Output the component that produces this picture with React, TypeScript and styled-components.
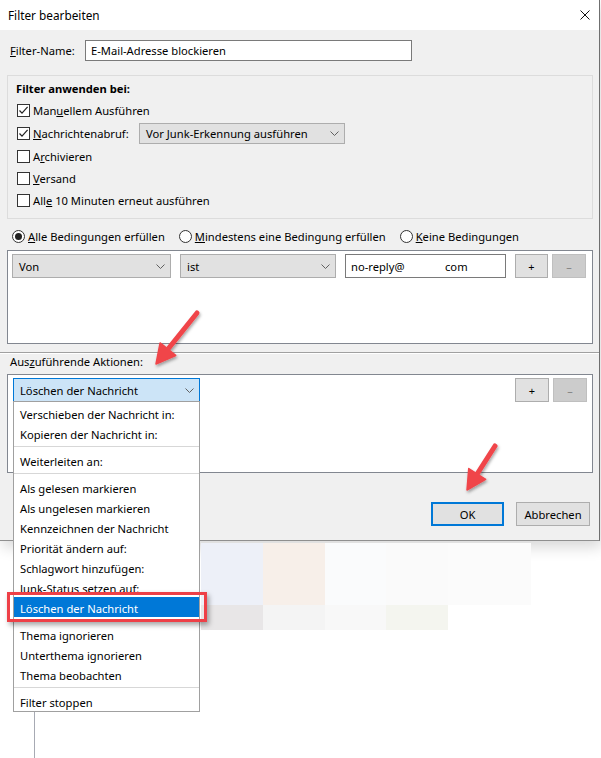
import React from 'react';
import styled, { createGlobalStyle } from 'styled-components';

const GlobalStyle = createGlobalStyle`
  html, body { margin: 0; padding: 0; background: #fff; }
  body {
    font-family: "Noto Sans", "Liberation Sans", sans-serif;
    font-size: 11.2px;
    color: #000;
  }
  * { box-sizing: border-box; }
`;

const Page = styled.div`
  position: relative;
  width: 601px;
  height: 758px;
  overflow: hidden;
  background: #fff;
`;

const Dialog = styled.div`
  width: 600px;
  height: 541px;
  display: flex;
  flex-direction: column;
  border-right: 1px solid #6f6f6f;
  border-bottom: 1px solid #8f8f8f;
  background: #f0f0f0;
  box-shadow: 2px 6px 14px rgba(0, 0, 0, 0.16);
`;

const TitleBar = styled.div`
  height: 30px;
  flex: none;
  background: #fff;
  display: flex;
  align-items: center;
  justify-content: space-between;
  padding: 0 9px 0 8px;
  font-size: 11.8px;
`;

const Body = styled.div`
  flex: 1;
  display: flex;
  flex-direction: column;
  padding: 0 6px 14px 7px;
`;

const NameRow = styled.div`
  margin-top: 10px;
  height: 21px;
  display: flex;
  align-items: center;
`;

const FieldLabel = styled.label<{ $w?: number }>`
  width: ${(p) => (p.$w ? `${p.$w}px` : 'auto')};
  flex: none;
  padding-left: 3px;
  white-space: nowrap;
`;

const TextBox = styled.div<{ $w: number; $h: number }>`
  width: ${(p) => p.$w}px;
  height: ${(p) => p.$h}px;
  flex: none;
  background: #fff;
  border: 1px solid #7a7a7a;
  padding-left: 5px;
  display: flex;
  align-items: center;
  white-space: nowrap;
`;

const Key = styled.span`
  text-decoration: underline;
  text-underline-offset: 1px;
`;

const GroupBox = styled.div`
  margin-top: 14px;
  height: 144px;
  border: 1px solid #dcdcdc;
  padding: 4px 0 0 9px;
  display: flex;
  flex-direction: column;
`;

const GroupTitle = styled.div`
  font-weight: bold;
  height: 18px;
  line-height: 18px;
  margin: 0 0 1px -1px;
`;

const CheckRow = styled.div<{ $h: number }>`
  height: ${(p) => p.$h}px;
  display: flex;
  align-items: center;
  gap: 3px;
  white-space: nowrap;
`;

const Box = styled.span`
  width: 13px;
  height: 13px;
  flex: none;
  border: 1px solid #333;
  background: #fff;
  display: flex;
  align-items: center;
  justify-content: center;
`;

const RowLabel = styled.span<{ $w?: number }>`
  width: ${(p) => (p.$w ? `${p.$w}px` : 'auto')};
  flex: none;
`;

const SelectBox = styled.div<{ $w: number; $h: number; $active?: boolean }>`
  width: ${(p) => p.$w}px;
  height: ${(p) => p.$h}px;
  flex: none;
  position: relative;
  display: flex;
  align-items: center;
  justify-content: space-between;
  padding: 0 5px 0 6px;
  white-space: nowrap;
  background: ${(p) => (p.$active ? '#cce4f7' : '#e1e1e1')};
  border: 1px solid ${(p) => (p.$active ? '#0078d7' : '#adadad')};
`;

const RadioRow = styled.div`
  margin: 7px 0 0 5px;
  height: 20px;
  display: flex;
  align-items: center;
  gap: 14px;
  white-space: nowrap;
`;

const RadioItem = styled.span`
  display: flex;
  align-items: center;
  gap: 3px;
`;

const RadioCircle = styled.span<{ $on?: boolean }>`
  width: 13px;
  height: 13px;
  border-radius: 50%;
  border: 1px solid #333;
  background: #fff;
  display: flex;
  align-items: center;
  justify-content: center;
  &::after {
    content: '';
    width: 7px;
    height: 7px;
    border-radius: 50%;
    background: ${(p) => (p.$on ? '#222' : 'transparent')};
  }
`;

const ListBox = styled.div<{ $h: number; $pad: string }>`
  height: ${(p) => p.$h}px;
  flex: none;
  background: #fff;
  border: 1px solid #828790;
  padding: ${(p) => p.$pad};
  display: flex;
  align-items: flex-start;
`;

const ConditionsBox = styled(ListBox)`
  margin-top: 4px;
  gap: 9px;
`;

const ActionsBox = styled(ListBox)`
  margin-top: 4px;
  justify-content: space-between;
  position: relative;
  z-index: 5;
`;

const ButtonPair = styled.div`
  display: flex;
  gap: 4px;
`;

const SmallButton = styled.div<{ $disabled?: boolean; $w: number }>`
  width: ${(p) => p.$w}px;
  height: 24px;
  display: flex;
  align-items: center;
  justify-content: center;
  background: ${(p) => (p.$disabled ? '#cccccc' : '#e1e1e1')};
  border: 1px solid ${(p) => (p.$disabled ? '#bfbfbf' : '#adadad')};
  color: ${(p) => (p.$disabled ? '#838383' : '#000')};
  font-size: 11px;
`;

const Separator = styled.div`
  margin: 8px -6px 0 -7px;
  height: 2px;
  border-top: 1px solid #a0a0a0;
  border-bottom: 1px solid #fff;
`;

const ActionsLabel = styled.div`
  height: 16px;
  line-height: 16px;
  padding-left: 3px;
`;

const ButtonRow = styled.div`
  margin-top: 29px;
  height: 24px;
  display: flex;
  justify-content: flex-end;
  gap: 12px;
  padding-right: 3px;
`;

const DialogButton = styled.div<{ $default?: boolean; $w: number }>`
  width: ${(p) => p.$w}px;
  height: 24px;
  display: flex;
  align-items: center;
  justify-content: center;
  background: #e1e1e1;
  border: ${(p) => (p.$default ? '2px solid #0078d7' : '1px solid #adadad')};
`;

const DropList = styled.div`
  position: absolute;
  top: 100%;
  left: -1px;
  width: 187px;
  background: #fff;
  border: 1px solid #a0a0a0;
  padding-top: 1px;
  z-index: 20;
`;

const DropItem = styled.div<{ $selected?: boolean }>`
  position: relative;
  height: 20px;
  line-height: 23px;
  padding-left: 6px;
  white-space: nowrap;
  background: ${(p) => (p.$selected ? '#0078d7' : 'transparent')};
  color: ${(p) => (p.$selected ? '#fff' : '#000')};
`;

const DropSep = styled.div`
  height: 7px;
  background: linear-gradient(#d7d7d7, #d7d7d7) center / 100% 1px no-repeat;
`;

const RedFrame = styled.span`
  position: absolute;
  left: -7px;
  right: -8px;
  top: -5px;
  bottom: -5px;
  border: 3px solid #ee4047;
  box-shadow: 2px 3px 5px rgba(0, 0, 0, 0.35);
  pointer-events: none;
`;

const Tiles = styled.div`
  margin: 2px 0 0 201px;
  display: grid;
  grid-template-columns: 62px 62px 61px 62px 83px;
  grid-template-rows: 62px 25px;
  width: 330px;
`;

const Tile = styled.div<{ $c: string }>`
  background: ${(p) => p.$c};
`;

const PageRule = styled.div`
  margin-left: 34px;
  width: 1px;
  height: 128px;
  background: #a7aab3;
`;

const Overlay = styled.svg`
  position: absolute;
  left: 0;
  top: 0;
  width: 601px;
  height: 758px;
  pointer-events: none;
  z-index: 50;
`;

const Chevron = () => (
  <svg width="9" height="5" viewBox="0 0 9 5">
    <polyline points="0.5,0.5 4.5,4.5 8.5,0.5" fill="none" stroke="#606060" strokeWidth="1" />
  </svg>
);

const Check = ({ on }: { on?: boolean }) => (
  <Box>
    {on && (
      <svg width="11" height="11" viewBox="0 0 11 11">
        <polyline points="1.5,5.5 4,8.2 9.6,1.8" fill="none" stroke="#222" strokeWidth="1.2" />
      </svg>
    )}
  </Box>
);

const Arrow = ({ x1, y1, x2, y2 }: { x1: number; y1: number; x2: number; y2: number }) => {
  const dx = x2 - x1;
  const dy = y2 - y1;
  const len = Math.hypot(dx, dy);
  const ux = dx / len;
  const uy = dy / len;
  const hl = 19;
  const hw = 10;
  const bx = x2 - ux * hl;
  const by = y2 - uy * hl;
  const px = -uy;
  const py = ux;
  const pts = `${x2},${y2} ${bx + px * hw},${by + py * hw} ${bx - px * hw},${by - py * hw}`;
  return (
    <g filter="url(#arrowShadow)">
      <line x1={x1} y1={y1} x2={bx + ux * 2} y2={by + uy * 2} stroke="#f0454a" strokeWidth="5" strokeLinecap="round" />
      <polygon points={pts} fill="#f0454a" stroke="#f0454a" strokeWidth="1.5" strokeLinejoin="round" />
    </g>
  );
};

const menuItems: (string | null)[] = [
  'Verschieben der Nachricht in:',
  'Kopieren der Nachricht in:',
  null,
  'Weiterleiten an:',
  null,
  'Als gelesen markieren',
  'Als ungelesen markieren',
  'Kennzeichnen der Nachricht',
  'Priorität ändern auf:',
  'Schlagwort hinzufügen:',
  'Junk-Status setzen auf:',
  'Löschen der Nachricht',
  null,
  'Thema ignorieren',
  'Unterthema ignorieren',
  'Thema beobachten',
  null,
  'Filter stoppen',
];

const tileColors = [
  '#edf0f8', '#f7efe9', '#fafbfc', '#fafafa', '#fbfbfb',
  '#e8e6e7', '#f4f4f4', '#f8f8f8', '#f4f5ef',
];

export default function App() {
  return (
    <Page>
      <GlobalStyle />
      <Dialog>
        <TitleBar>
          <span>Filter bearbeiten</span>
          <svg width="10" height="10" viewBox="0 0 10 10">
            <path d="M0.5 0.5 L9.5 9.5 M9.5 0.5 L0.5 9.5" stroke="#111" strokeWidth="1" fill="none" />
          </svg>
        </TitleBar>
        <Body>
          <NameRow>
            <FieldLabel $w={78}>
              <Key>F</Key>ilter-Name:
            </FieldLabel>
            <TextBox $w={327} $h={21}>E-Mail-Adresse blockieren</TextBox>
          </NameRow>

          <GroupBox>
            <GroupTitle>Filter anwenden bei:</GroupTitle>
            <CheckRow $h={22}>
              <Check on />
              <RowLabel>
                Man<Key>u</Key>ellem Ausführen
              </RowLabel>
            </CheckRow>
            <CheckRow $h={24}>
              <Check on />
              <RowLabel $w={103}>
                <Key>N</Key>achrichtenabruf:
              </RowLabel>
              <SelectBox $w={206} $h={21}>
                <span>Vor Junk-Erkennung ausführen</span>
                <Chevron />
              </SelectBox>
            </CheckRow>
            <CheckRow $h={22}>
              <Check />
              <RowLabel>
                A<Key>r</Key>chivieren
              </RowLabel>
            </CheckRow>
            <CheckRow $h={22}>
              <Check />
              <RowLabel>
                <Key>V</Key>ersand
              </RowLabel>
            </CheckRow>
            <CheckRow $h={22}>
              <Check />
              <RowLabel>
                All<Key>e</Key> 10 Minuten erneut ausführen
              </RowLabel>
            </CheckRow>
          </GroupBox>

          <RadioRow>
            <RadioItem>
              <RadioCircle $on />
              <span>
                <Key>A</Key>lle Bedingungen erfüllen
              </span>
            </RadioItem>
            <RadioItem>
              <RadioCircle />
              <span>
                <Key>M</Key>indestens eine Bedingung erfüllen
              </span>
            </RadioItem>
            <RadioItem>
              <RadioCircle />
              <span>
                <Key>K</Key>eine Bedingungen
              </span>
            </RadioItem>
          </RadioRow>

          <ConditionsBox $h={94} $pad="3px 4px 0 4px">
            <SelectBox $w={159} $h={24}>
              <span>Von</span>
              <Chevron />
            </SelectBox>
            <SelectBox $w={156} $h={24}>
              <span>ist</span>
              <Chevron />
            </SelectBox>
            <TextBox $w={161} $h={24}>
              <span style={{ display: 'inline-block', width: 94 }}>no-reply@</span>
              <span>com</span>
            </TextBox>
            <ButtonPair>
              <SmallButton $w={33}>+</SmallButton>
              <SmallButton $w={34} $disabled>
                –
              </SmallButton>
            </ButtonPair>
          </ConditionsBox>

          <Separator />
          <ActionsLabel>
            Aus<Key>z</Key>uführende Aktionen:
          </ActionsLabel>

          <ActionsBox $h={99} $pad="3px 5px 0 5px">
            <SelectBox $w={187} $h={24} $active>
              <span>Löschen der Nachricht</span>
              <Chevron />
              <DropList>
                {menuItems.map((item, i) =>
                  item === null ? (
                    <DropSep key={i} />
                  ) : (
                    <DropItem key={i} $selected={item === 'Löschen der Nachricht'}>
                      {item}
                      {item === 'Löschen der Nachricht' && <RedFrame />}
                    </DropItem>
                  )
                )}
              </DropList>
            </SelectBox>
            <ButtonPair>
              <SmallButton $w={34}>+</SmallButton>
              <SmallButton $w={34} $disabled>
                –
              </SmallButton>
            </ButtonPair>
          </ActionsBox>

          <ButtonRow>
            <DialogButton $w={73} $default>
              OK
            </DialogButton>
            <DialogButton $w={74}>Abbrechen</DialogButton>
          </ButtonRow>
        </Body>
      </Dialog>

      <Tiles>
        {tileColors.map((c, i) => (
          <Tile key={i} $c={c} />
        ))}
      </Tiles>
      <PageRule />

      <Overlay viewBox="0 0 601 758">
        <defs>
          <filter id="arrowShadow" x="-30%" y="-30%" width="160%" height="160%">
            <feDropShadow dx="1" dy="2" stdDeviation="1.6" floodColor="#000" floodOpacity="0.35" />
          </filter>
        </defs>
        <Arrow x1={197} y1={313} x2={156} y2={364} />
        <Arrow x1={495} y1={446} x2={467} y2={490} />
      </Overlay>
    </Page>
  );
}
